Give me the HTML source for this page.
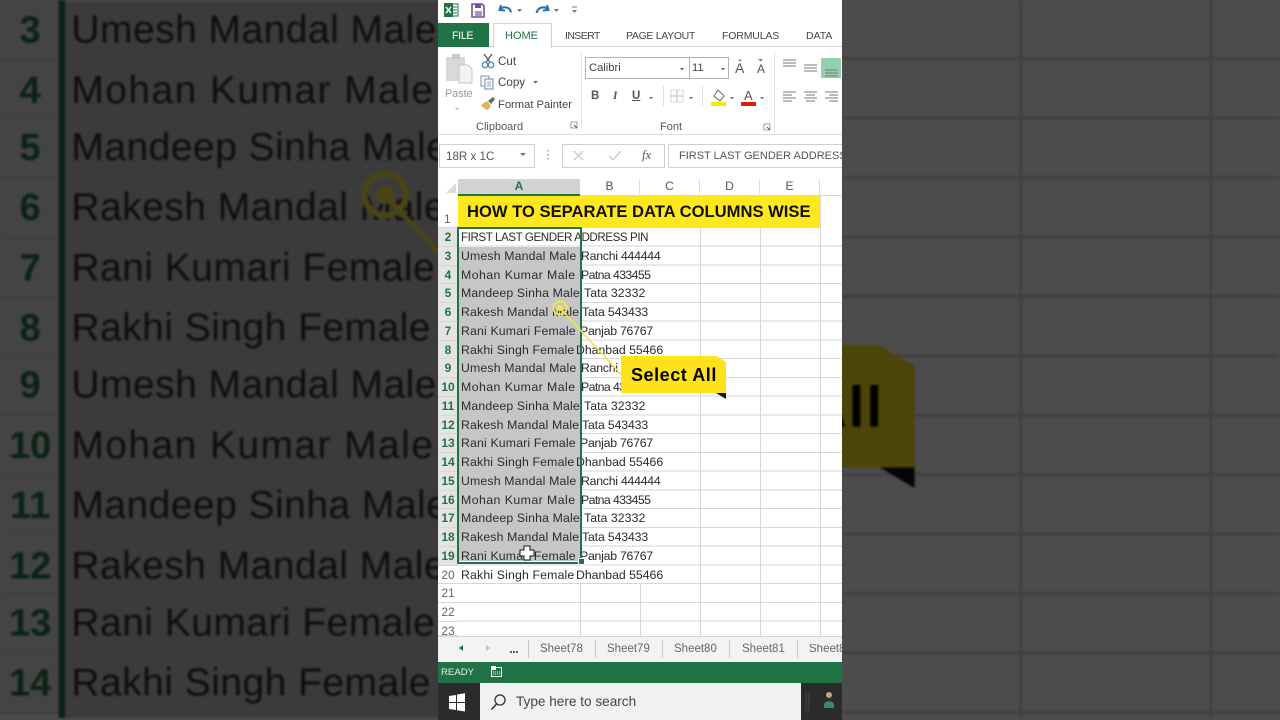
<!DOCTYPE html>
<html>
<head>
<meta charset="utf-8">
<style>
html,body{margin:0;padding:0;width:1280px;height:720px;overflow:hidden;background:#4c4c4c}
body{position:relative;font-family:"Liberation Sans",sans-serif}
.a,.t{position:absolute}
.t{white-space:nowrap;line-height:1}
#bg{position:absolute;left:0;top:0;width:1280px;height:720px;overflow:hidden;filter:brightness(.3) blur(1.1px)}
#bgi{position:absolute;left:0;top:0;width:842.5px;height:473.5px;overflow:hidden;background:#fff;transform-origin:0 0;transform:translate(-1390px,-781.5px) scale(3.17)}
.sheet{position:absolute;left:0;top:0;width:842px;height:720px}
.hl{position:absolute;left:458px;top:228px;background:repeating-linear-gradient(to bottom,transparent 0,transparent 17.75px,#d6d6d6 17.75px,#d6d6d6 18.75px)}
.v{position:absolute;width:1px;background:#d6d6d6}
.rows{position:absolute;left:458px;top:228px}
.r{height:18.75px;line-height:19px;font-size:12.3px;color:#2b2b2b;white-space:nowrap;padding-left:3px;letter-spacing:-.25px}
.r i{display:inline-block;font-style:normal;letter-spacing:.15px}
.ru i{width:120px}.rm i{width:120px;letter-spacing:.45px}.rd i{width:123px}.rk i{width:121px}.rn i{width:119px}.rh i{width:115px}
.rm{letter-spacing:-.6px}.rd{letter-spacing:.05px}.rk{letter-spacing:-.15px}
.rh{letter-spacing:-.03px}
.rf{font-size:11.6px;letter-spacing:-.42px}
.nums{position:absolute;left:438px;top:228px;width:20px;background:#fff}
.n{height:18.75px;line-height:19px;font-size:12px;color:#666;text-align:center;box-sizing:border-box;border-bottom:1px solid #d6d6d6}
.n.s{color:#217346;font-weight:bold;background:#e4e4e4}
.c{position:absolute;top:179px;height:17px;line-height:15px;font-size:12px;color:#555;text-align:center;background:#fff;border-right:1px solid #dcdcdc;border-bottom:1px solid #d6d6d6;box-sizing:border-box}
.rb{font-size:11.6px;color:#444}
.tab{font-size:10.5px;color:#444;top:30.5px}
.sh{font-size:11.5px;color:#666;top:644px}
.sep{position:absolute;top:640px;height:18px;width:1px;background:#c8c8c8}
</style>
</head>
<body>
<div id="bg"><div id="bgi">
<div class="sheet" style="height:473px;overflow:hidden">
<div class="hl" style="width:384px;height:245px"></div>
<div class="v" style="left:700px;top:228px;height:245px"></div>
<div class="v" style="left:760px;top:228px;height:245px"></div>
<div class="v" style="left:820px;top:228px;height:245px"></div>
<div class="a" style="left:458px;top:247px;width:122px;height:226px;background:#c6c6c6"></div>
<div class="nums">
<div class="n s">2</div><div class="n s">3</div><div class="n s">4</div><div class="n s">5</div><div class="n s">6</div><div class="n s">7</div><div class="n s">8</div><div class="n s">9</div><div class="n s">10</div><div class="n s">11</div><div class="n s">12</div><div class="n s">13</div><div class="n s">14</div>
</div>
<div class="rows">
<div class="r rf">FIRST LAST GENDER ADDRESS PIN</div>
<div class="r ru"><i>Umesh Mandal Male</i>Ranchi 444444</div>
<div class="r rm"><i>Mohan Kumar Male</i>Patna 433455</div>
<div class="r rd"><i>Mandeep Sinha Male</i>Tata 32332</div>
<div class="r rk"><i>Rakesh Mandal Male</i>Tata 543433</div>
<div class="r rn"><i>Rani Kumari Female</i>Panjab 76767</div>
<div class="r rh"><i>Rakhi Singh Female</i>Dhanbad 55466</div>
<div class="r ru"><i>Umesh Mandal Male</i>Ranchi 444444</div>
<div class="r rm"><i>Mohan Kumar Male</i>Patna 433455</div>
<div class="r rd"><i>Mandeep Sinha Male</i>Tata 32332</div>
<div class="r rk"><i>Rakesh Mandal Male</i>Tata 543433</div>
<div class="r rn"><i>Rani Kumari Female</i>Panjab 76767</div>
<div class="r rh"><i>Rakhi Singh Female</i>Dhanbad 55466</div>
</div>
<div class="a" style="left:457px;top:227px;width:2px;height:246px;background:#217346"></div>
<div class="a" style="left:579px;top:227px;width:2px;height:246px;background:#217346"></div>
<svg class="a" style="left:438px;top:0" width="404" height="473">
<path d="M122 308L190 382" stroke="#f7e34a" stroke-width="1.600" fill="none"/>
<circle cx="122" cy="308" r="6.500" fill="none" stroke="#f7e34a" stroke-width="2"/>
<circle cx="122" cy="308" r="3" fill="#f7e34a"/>
<path d="M183 355.500H278L289 362V394H183Z" fill="#ffe21c"/>
<path d="M278 394H289V400.500Z" fill="#111"/>
</svg>
<div class="t" style="left:631px;top:366px;font-size:18px;font-weight:bold;letter-spacing:.6px;color:#000">Select All</div>
</div>
</div></div>

<div class="a" style="left:438px;top:0;width:404px;height:720px;overflow:hidden;background:#fff">
<div class="sheet" style="left:-438px">
<!-- sheet -->
<div class="a" style="left:438px;top:179px;width:404px;height:17px;background:#fff"></div>
<svg class="a" style="left:445px;top:182px" width="12" height="12"><path d="M11 1V11H1Z" fill="#dcdcdc"/></svg>
<div class="c" style="left:458px;width:122px;background:#d2d2d2;color:#217346;font-weight:bold;border-bottom:2px solid #217346;border-right:0">A</div>
<div class="c" style="left:580px;width:60px">B</div>
<div class="c" style="left:640px;width:60px">C</div>
<div class="c" style="left:700px;width:60px">D</div>
<div class="c" style="left:760px;width:60px">E</div>
<div class="c" style="left:820px;width:22px;border-right:0"></div>
<div class="a" style="left:438px;top:196px;width:20px;height:32px;background:#fff;border-bottom:1px solid #d6d6d6;box-sizing:border-box"></div>
<div class="t" style="left:444px;top:213px;font-size:12px;color:#666">1</div>
<div class="hl" style="width:384px;height:408px"></div>
<div class="v" style="left:580px;top:584px;height:52px"></div>
<div class="v" style="left:640px;top:584px;height:52px"></div>
<div class="v" style="left:700px;top:228px;height:408px"></div>
<div class="v" style="left:760px;top:228px;height:408px"></div>
<div class="v" style="left:820px;top:196px;height:440px"></div>
<div class="a" style="left:458px;top:196px;width:362px;height:32px;background:#ffe81c"></div>
<div class="t" style="left:467px;top:204px;font-size:16.6px;font-weight:bold;color:#111">HOW TO SEPARATE DATA COLUMNS WISE</div>
<div class="a" style="left:458px;top:247px;width:122px;height:314px;background:#c6c6c6"></div>
<div class="nums">
<div class="n s">2</div><div class="n s">3</div><div class="n s">4</div><div class="n s">5</div><div class="n s">6</div><div class="n s">7</div><div class="n s">8</div><div class="n s">9</div><div class="n s">10</div><div class="n s">11</div><div class="n s">12</div><div class="n s">13</div><div class="n s">14</div><div class="n s">15</div><div class="n s">16</div><div class="n s">17</div><div class="n s">18</div><div class="n s">19</div><div class="n">20</div><div class="n">21</div><div class="n">22</div><div class="n" style="height:14px">23</div>
</div>
<div class="rows">
<div class="r rf">FIRST LAST GENDER ADDRESS PIN</div>
<div class="r ru"><i>Umesh Mandal Male</i>Ranchi 444444</div>
<div class="r rm"><i>Mohan Kumar Male</i>Patna 433455</div>
<div class="r rd"><i>Mandeep Sinha Male</i>Tata 32332</div>
<div class="r rk"><i>Rakesh Mandal Male</i>Tata 543433</div>
<div class="r rn"><i>Rani Kumari Female</i>Panjab 76767</div>
<div class="r rh"><i>Rakhi Singh Female</i>Dhanbad 55466</div>
<div class="r ru"><i>Umesh Mandal Male</i>Ranchi 444444</div>
<div class="r rm"><i>Mohan Kumar Male</i>Patna 433455</div>
<div class="r rd"><i>Mandeep Sinha Male</i>Tata 32332</div>
<div class="r rk"><i>Rakesh Mandal Male</i>Tata 543433</div>
<div class="r rn"><i>Rani Kumari Female</i>Panjab 76767</div>
<div class="r rh"><i>Rakhi Singh Female</i>Dhanbad 55466</div>
<div class="r ru"><i>Umesh Mandal Male</i>Ranchi 444444</div>
<div class="r rm"><i>Mohan Kumar Male</i>Patna 433455</div>
<div class="r rd"><i>Mandeep Sinha Male</i>Tata 32332</div>
<div class="r rk"><i>Rakesh Mandal Male</i>Tata 543433</div>
<div class="r rn"><i>Rani Kumari Female</i>Panjab 76767</div>
<div class="r rh"><i>Rakhi Singh Female</i>Dhanbad 55466</div>
</div>
<div class="a" style="left:457px;top:227px;width:121px;height:333px;border:2px solid #217346"></div>
<div class="a" style="left:578px;top:558px;width:5px;height:5px;background:#217346;border:1px solid #fff"></div>
<svg class="a" style="left:438px;top:0" width="404" height="640">
<path d="M86 546h6v4h4v6h-4v4h-6v-4h-4v-6h4z" fill="#fff" stroke="#111" stroke-width="1"/>
<path d="M122 308L190 382" stroke="#f7e34a" stroke-width="1.600" fill="none"/>
<circle cx="122" cy="308" r="6.500" fill="none" stroke="#f7e34a" stroke-width="2"/>
<circle cx="122" cy="308" r="3" fill="#f7e34a"/>
<path d="M183 356H278L288 362V393H183Z" fill="#ffe21c"/>
<path d="M278 393H288V399Z" fill="#111"/>
</svg>
<div class="t" style="left:631px;top:366px;font-size:18px;font-weight:bold;letter-spacing:.55px;color:#000">Select All</div>

<!-- chrome top -->
<div class="a" style="left:438px;top:0;width:404px;height:179px;background:#fff"></div>
<div class="a" style="left:438px;top:46px;width:404px;height:1px;background:#d4d4d4"></div>
<div class="a" style="left:438px;top:134px;width:404px;height:1px;background:#dcdcdc"></div>

<!-- QAT -->
<svg class="a" style="left:438px;top:0" width="404" height="24">
<rect x="11" y="4" width="9" height="12" fill="#fff" stroke="#217346"/>
<path d="M14 7h5M14 10h5M14 13h5" stroke="#217346"/>
<rect x="6" y="3" width="9" height="14" fill="#217346"/>
<path d="M8 7l5 6M13 7l-5 6" stroke="#fff" stroke-width="1.400"/>
<path d="M34 4h10l2 2v11H34z" fill="#fff" stroke="#7a4a9c" stroke-width="1.600"/>
<rect x="37" y="4" width="6" height="4" fill="#7a4a9c"/>
<rect x="37" y="11" width="7" height="5" fill="#7a4a9c" opacity=".6"/>
<path d="M63 5L61.500 10L67 10.500" fill="none" stroke="#2a6fb0" stroke-width="2"/>
<path d="M62 9.500C65 6 72 6.500 73 12.500" fill="none" stroke="#2a6fb0" stroke-width="2"/>
<path d="M79 9h5l-2.500 3z" fill="#777"/>
<path d="M109 5L110.500 10L105 10.500" fill="none" stroke="#2a6fb0" stroke-width="2"/>
<path d="M110 9.500C107 6 100 6.500 98.500 13" fill="none" stroke="#2a6fb0" stroke-width="2"/>
<path d="M116 9h5l-2.500 3z" fill="#777"/>
<path d="M134 7h5" stroke="#777"/><path d="M134 10h5l-2.500 3z" fill="#777"/>
</svg>

<!-- tabs -->
<div class="a" style="left:438px;top:23px;width:51px;height:24px;background:#217346"></div>
<div class="t tab" style="left:452px;color:#fff;font-size:10.6px;letter-spacing:-.3px">FILE</div>
<div class="a" style="left:493px;top:23px;width:57px;height:24px;background:#fff;border:1px solid #d4d4d4;border-bottom:0"></div>
<div class="t tab" style="left:505px;color:#217346;font-size:11px">HOME</div>
<div class="t tab" style="left:565px;letter-spacing:-.6px">INSERT</div>
<div class="t tab" style="left:626px;letter-spacing:-.32px">PAGE LAYOUT</div>
<div class="t tab" style="left:722px;letter-spacing:-.15px">FORMULAS</div>
<div class="t tab" style="left:806px;letter-spacing:-.05px">DATA</div>

<!-- clipboard -->
<svg class="a" style="left:438px;top:47px" width="150" height="87">
<rect x="8" y="10" width="19" height="24" fill="#d9d9d9"/>
<rect x="14" y="7" width="8" height="5" fill="#c8c8c8"/>
<path d="M21 18h9l4 4v14H21z" fill="#f2f2f2" stroke="#c4c4c4"/>
<path d="M17 61h4l-2 2z" fill="#aaa"/>
<circle cx="47" cy="18" r="2.800" fill="none" stroke="#3e7cb5" stroke-width="1.200"/>
<circle cx="53" cy="18" r="2.800" fill="none" stroke="#3e7cb5" stroke-width="1.200"/>
<path d="M48 15L54 7M52 15L46 7" stroke="#555" stroke-width="1.300"/>
<rect x="43" y="29" width="8" height="10" fill="#fff" stroke="#8a8a8a"/>
<rect x="47" y="32" width="8" height="10" fill="#fff" stroke="#5b87b2"/>
<path d="M49 35h4M49 37h4M49 39h4" stroke="#5b87b2" stroke-width=".7"/>
<path d="M95 34h5l-2.500 2.500z" fill="#666"/>
<path d="M43 58l6-4 4 5-3 4c-2 0-5-2-7-5z" fill="#e0b25a"/>
<path d="M50 54l5-4 2 2-4 5z" fill="#666"/>
<path d="M133 75h6v6h-6z" fill="none" stroke="#888" stroke-width=".8"/>
<path d="M136 78l3 3" stroke="#555"/>
<rect x="143" y="6" width="1" height="76" fill="#e0e0e0"/>
</svg>
<div class="t rb" style="left:498px;top:56px">Cut</div>
<div class="t rb" style="left:498px;top:77px">Copy</div>
<div class="t rb" style="left:498px;top:100px;font-size:11.2px">Format Painter</div>
<div class="t" style="left:445px;top:89px;font-size:10.8px;color:#9a9a9a">Paste</div>
<div class="t" style="left:476px;top:122px;font-size:11px;color:#555">Clipboard</div>
<div class="t" style="left:660px;top:122px;font-size:11px;color:#555">Font</div>

<!-- font -->
<div class="a" style="left:585px;top:57px;width:103px;height:20px;background:#fff;border:1px solid #b4b4b4"></div>
<div class="a" style="left:689px;top:57px;width:38px;height:20px;background:#fff;border:1px solid #b4b4b4"></div>
<div class="t" style="left:589px;top:63px;font-size:11.2px;color:#444">Calibri</div>
<div class="t" style="left:692px;top:63px;font-size:11.2px;color:#444">11</div>
<div class="t" style="left:735px;top:61px;font-size:14px;color:#555">A</div>
<div class="t" style="left:757px;top:63px;font-size:12px;color:#555">A</div>
<div class="t" style="left:591px;top:91px;font-size:11.5px;font-weight:bold;color:#555">B</div>
<div class="t" style="left:613px;top:91px;font-size:11.5px;font-style:italic;font-weight:bold;font-family:'Liberation Serif',serif;color:#555">I</div>
<div class="t" style="left:632px;top:91px;font-size:11.5px;font-weight:bold;text-decoration:underline;color:#555">U</div>
<div class="t" style="left:744px;top:89px;font-size:13px;color:#555">A</div>
<svg class="a" style="left:578px;top:50px" width="264" height="85">
<path d="M102 18h4l-2 2.500zM143 18h4l-2 2.500z" fill="#666"/>
<path d="M160 11l2-2 2 2zM180 9h5l-2.500 2.500z" fill="#4a8ec9"/>
<path d="M71 47h4l-2 2.500zM111 47h4l-2 2.500zM152 47h4l-2 2.500zM182 47h4l-2 2.500z" fill="#777"/>
<rect x="93" y="40" width="12" height="12" fill="none" stroke="#bdbdbd" stroke-dasharray="1.500 1"/>
<path d="M99 40v12M93 46h12" stroke="#bdbdbd"/>
<path d="M140 40l6 6-4 5-6-5z" fill="#fff" stroke="#666"/>
<rect x="133" y="52" width="15" height="4" fill="#ffe600"/>
<rect x="163" y="52" width="15" height="4" fill="#d81e06"/>
<rect x="85" y="36" width="1" height="20" fill="#e0e0e0"/>
<rect x="124" y="36" width="1" height="20" fill="#e0e0e0"/>
<path d="M186 74h6v6h-6z" fill="none" stroke="#888" stroke-width=".8"/>
<path d="M189 77l3 3" stroke="#555"/>
<rect x="196" y="3" width="1" height="79" fill="#e0e0e0"/>
<rect x="243" y="8" width="20" height="20" fill="#94d0b0"/>
<g stroke="#777" stroke-width="1" fill="none">
<path d="M205 10h13M205 13h13M205 16h13" />
<path d="M226 15h13M226 18h13M226 21h13"/>
<path d="M247 20h13M247 23h13M247 26h13"/>
<path d="M205 42h13M205 45h9M205 48h13M205 51h9"/>
<path d="M226 42h13M228 45h9M226 48h13M228 51h9"/>
<path d="M247 42h13M251 45h9M247 48h13M251 51h9"/>
</g>
</svg>

<!-- formula bar -->
<div class="a" style="left:439px;top:144px;width:94px;height:22px;background:#fff;border:1px solid #d0d0d0"></div>
<div class="t" style="left:446px;top:151px;font-size:11.6px;color:#555">18R x 1C</div>
<div class="a" style="left:562px;top:144px;width:101px;height:22px;background:#fff;border:1px solid #d0d0d0"></div>
<svg class="a" style="left:438px;top:140px" width="404" height="30">
<path d="M82 13h6l-3 3z" fill="#777"/>
<path d="M110 10v1.500M110 14v1.500M110 18v1.500" stroke="#888" stroke-width="1.200"/>
<path d="M136 11l9 9M145 11l-9 9" stroke="#c2c2c2" stroke-width="1.200"/>
<path d="M171 16l4 4 8-9" stroke="#c2c2c2" stroke-width="1.200" fill="none"/>
</svg>
<div class="t" style="left:642px;top:149px;font-size:12.5px;font-style:italic;font-family:'Liberation Serif',serif;color:#555">fx</div>
<div class="a" style="left:668px;top:144px;width:173px;height:22px;background:#fff;border:1px solid #d0d0d0;border-right:0"></div>
<div class="t" style="left:679px;top:151px;font-size:11px;color:#555;width:163px;overflow:hidden">FIRST LAST GENDER ADDRESS PIN</div>

<!-- tabs bottom -->
<div class="a" style="left:438px;top:636px;width:404px;height:26px;background:#f3f3f3;border-top:1px solid #d4d4d4;box-sizing:border-box"></div>
<svg class="a" style="left:438px;top:640px" width="90" height="20"><path d="M25 5v6l-4-3z" fill="#217346"/><path d="M48 5v6l4-3z" fill="#c4c4c4"/><circle cx="73" cy="12" r="1" fill="#333"/><circle cx="76" cy="12" r="1" fill="#333"/><circle cx="79" cy="12" r="1" fill="#333"/></svg>
<div class="sep" style="left:528px"></div>
<div class="t sh" style="left:540px">Sheet78</div>
<div class="sep" style="left:595px"></div>
<div class="t sh" style="left:607px">Sheet79</div>
<div class="sep" style="left:662px"></div>
<div class="t sh" style="left:674px">Sheet80</div>
<div class="sep" style="left:729px"></div>
<div class="t sh" style="left:742px">Sheet81</div>
<div class="sep" style="left:797px"></div>
<div class="t sh" style="left:809px;width:33px;overflow:hidden">Sheet82</div>

<!-- status -->
<div class="a" style="left:438px;top:662px;width:404px;height:21px;background:#217346"></div>
<div class="t" style="left:441px;top:668px;font-size:9.6px;color:#e4f0ea">READY</div>
<svg class="a" style="left:490px;top:665px" width="14" height="14"><rect x="1.500" y="2.500" width="10" height="9" fill="none" stroke="#fff"/><rect x="1" y="1" width="5" height="4" fill="#fff"/><path d="M3 7h7M3 9h7" stroke="#fff" stroke-dasharray="1 1"/></svg>

<!-- taskbar -->
<div class="a" style="left:438px;top:683px;width:404px;height:37px;background:#2b2b2b"></div>
<div class="a" style="left:480px;top:683px;width:321px;height:37px;background:#f1f1f1"></div>
<svg class="a" style="left:438px;top:683px" width="404" height="37">
<path d="M11 13l7-1v7h-7zM19 11.500l8-1.300v8.800h-8zM11 20h7v7l-7-1zM19 20h8v8.500l-8-1.300z" fill="#fff"/>
<circle cx="62" cy="17" r="5" fill="none" stroke="#333" stroke-width="1.300"/>
<path d="M58.500 21l-5 5.500" stroke="#333" stroke-width="1.500"/>
<path d="M368 10v18M371 10v18" stroke="#444"/>
<circle cx="391" cy="12" r="3" fill="#c9a27a"/>
<path d="M386 22c0-5 10-5 10 0v3h-10z" fill="#3a8a6a"/>
</svg>
<div class="t" style="left:516px;top:695px;font-size:13.6px;color:#444">Type here to search</div>
</div>
</div>
</body>
</html>
